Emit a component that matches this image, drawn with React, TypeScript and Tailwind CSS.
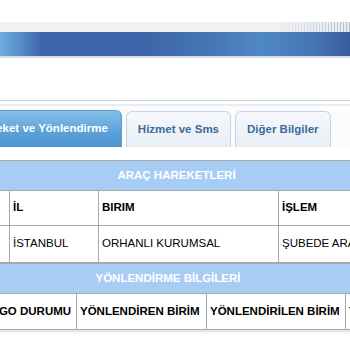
const font = { fontFamily: '"Liberation Sans", Arial, sans-serif' };

const Banner = () => (
  <div className="pt-[22px]">
    <div className="flex h-[10px]">
      <div className="flex-1 bg-[#eff1f3]" />
      <div className="w-[75px] bg-[linear-gradient(to_right,rgba(239,241,243,1),rgba(239,241,243,0.2)),repeating-linear-gradient(to_right,#e6eaf0_0px,#e6eaf0_2px,#9fb0c8_2px,#9fb0c8_3px)]" />
    </div>
    <div className="h-[24px] bg-[linear-gradient(to_right,#70acdb_0%,#5a92cc_5%,#3d66ab_12%,#3d64a8_40%,#4778b8_62%,#4f88c6_75%,#4678b8_88%,#3a5c9e_100%)]" />
    <div className="h-[2px] bg-[#d3dbe8]" />
  </div>
);

const tabs = ["Hizmet ve Sms", "Diğer Bilgiler"];

const Tabs = () => (
  <div className="mt-[42px]">
    <div className="h-[1px] bg-[#c9c9c9]" />
    <div className="h-[3px] bg-white" />
    <div className="h-[2px] bg-[#e6edf4]" />
    <div className="flex items-end gap-[4px] pt-[4px] bg-[#fafcfe] ml-[-37px]">
      <div className="shrink-0 whitespace-nowrap h-[37px] flex items-center px-[13px] rounded-t-[6px] border border-b-0 border-[#5e9ad0] bg-[linear-gradient(to_bottom,#86c0ea,#5aa0d8_60%,#4c94d0)] text-white font-bold text-[11.5px]">
        Hareket ve Yönlendirme
      </div>
      {tabs.map((t) => (
        <div
          key={t}
          className="shrink-0 whitespace-nowrap h-[36px] flex items-center px-[11px] rounded-t-[6px] border border-b-0 border-[#c6d3e2] bg-[linear-gradient(to_bottom,#f6f9fc,#e6edf5)] text-[#3d6a9b] font-bold text-[11.5px]"
        >
          {t}
        </div>
      ))}
    </div>
  </div>
);

const cell = "border border-[#a8a8a8] px-[3px] text-left text-[11.5px] text-black whitespace-nowrap overflow-hidden";

export default function App() {
  return (
    <div className="w-[350px] h-[350px] overflow-hidden bg-white" style={font}>
      <Banner />
      <Tabs />
      <div className="mt-[13px]">
        <table className="table-fixed border-collapse ml-[-51px] w-[454px]">
          <colgroup>
            <col className="w-[60px]" />
            <col className="w-[89px]" />
            <col className="w-[180px]" />
            <col className="w-[125px]" />
          </colgroup>
          <tbody>
            <tr className="h-[30px]">
              <td colSpan={4} className="bg-[#a8cdf5] text-center text-white font-bold text-[11.5px] border border-[#a8a8a8]">
                ARAÇ HAREKETLERİ
              </td>
            </tr>
            <tr className="h-[35px]">
              <td className={cell + " font-bold"}></td>
              <td className={cell + " font-bold"}>İL</td>
              <td className={cell + " font-bold"}>BIRIM</td>
              <td className={cell + " font-bold"}>İŞLEM</td>
            </tr>
            <tr className="h-[37px]">
              <td className={cell}></td>
              <td className={cell}>İSTANBUL</td>
              <td className={cell}>ORHANLI KURUMSAL</td>
              <td className={cell}>ŞUBEDE ARAÇTAN</td>
            </tr>
          </tbody>
        </table>
        <table className="table-fixed border-collapse ml-[-100px] w-[535px] shadow-[0_2px_2px_rgba(0,0,0,0.12)]">
          <colgroup>
            <col className="w-[70px]" />
            <col className="w-[106px]" />
            <col className="w-[130px]" />
            <col className="w-[139px]" />
            <col className="w-[90px]" />
          </colgroup>
          <tbody>
            <tr className="h-[30px]">
              <td colSpan={5} className="bg-[#a8cdf5] text-center text-white font-bold text-[11.5px] border border-[#a8a8a8]">
                YÖNLENDİRME BİLGİLERİ
              </td>
            </tr>
            <tr className="h-[36px]">
              <td className={cell + " font-bold"}>TARİH</td>
              <td className={cell + " font-bold text-right pr-[7px]"}>KARGO DURUMU</td>
              <td className={cell + " font-bold"}>YÖNLENDİREN BİRİM</td>
              <td className={cell + " font-bold"}>YÖNLENDİRİLEN BİRİM</td>
              <td className={cell + " font-bold"}>TÜR</td>
            </tr>
          </tbody>
        </table>
      </div>
    </div>
  );
}
